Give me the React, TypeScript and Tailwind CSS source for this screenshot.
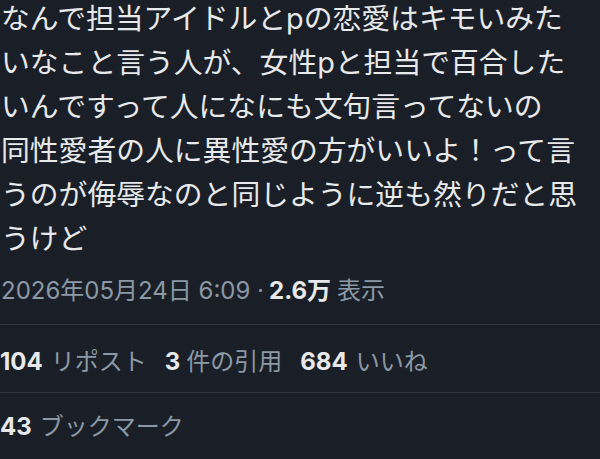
import React from "react";

const lines = [
  "なんで担当アイドルとpの恋愛はキモいみた",
  "いなこと言う人が、女性pと担当で百合した",
  "いんですって人になにも文句言ってないの",
  "同性愛者の人に異性愛の方がいいよ！って言",
  "うのが侮辱なのと同じように逆も然りだと思",
  "うけど",
];

export default function App() {
  return (
    <div
      className="w-[600px] h-[459px] overflow-hidden bg-[#1a1f27] text-[#e7e9ea]"
      style={{ fontFamily: 'Inter, "Noto Sans CJK JP", sans-serif' }}
    >
      <div className="-mt-[3px] pl-[1px] text-[28.8px] leading-[44px]">
        {lines.map((l, i) => (
          <div key={i} className="whitespace-nowrap">
            {l}
          </div>
        ))}
      </div>
      <div className="mt-[15px] mb-[18px] h-[30px] flex items-center pl-[1px] text-[24px] whitespace-nowrap">
        <span className="text-[#8b98a5]">2026年05月24日 6:09 ·</span>
        <span className="font-bold text-[#e7e9ea] ml-[5px]">2.6万</span>
        <span className="text-[#8b98a5] ml-[6px]">表示</span>
      </div>
      <div className="h-px bg-[#2f3640]" />
      <div className="pt-[22px] pb-[15px] h-[67px] flex items-center gap-[18px] text-[24px] whitespace-nowrap">
        <div>
          <span className="font-bold">104</span>
          <span className="text-[#8b98a5] ml-[8px]">リポスト</span>
        </div>
        <div>
          <span className="font-bold">3</span>
          <span className="text-[#8b98a5] ml-[6px]">件の引用</span>
        </div>
        <div>
          <span className="font-bold">684</span>
          <span className="text-[#8b98a5] ml-[8px]">いいね</span>
        </div>
      </div>
      <div className="h-px bg-[#2f3640]" />
      <div className="pt-[19px] h-[30px] box-content flex items-center text-[24px] whitespace-nowrap">
        <span className="font-bold">43</span>
        <span className="text-[#8b98a5] ml-[8px]">ブックマーク</span>
      </div>
    </div>
  );
}
